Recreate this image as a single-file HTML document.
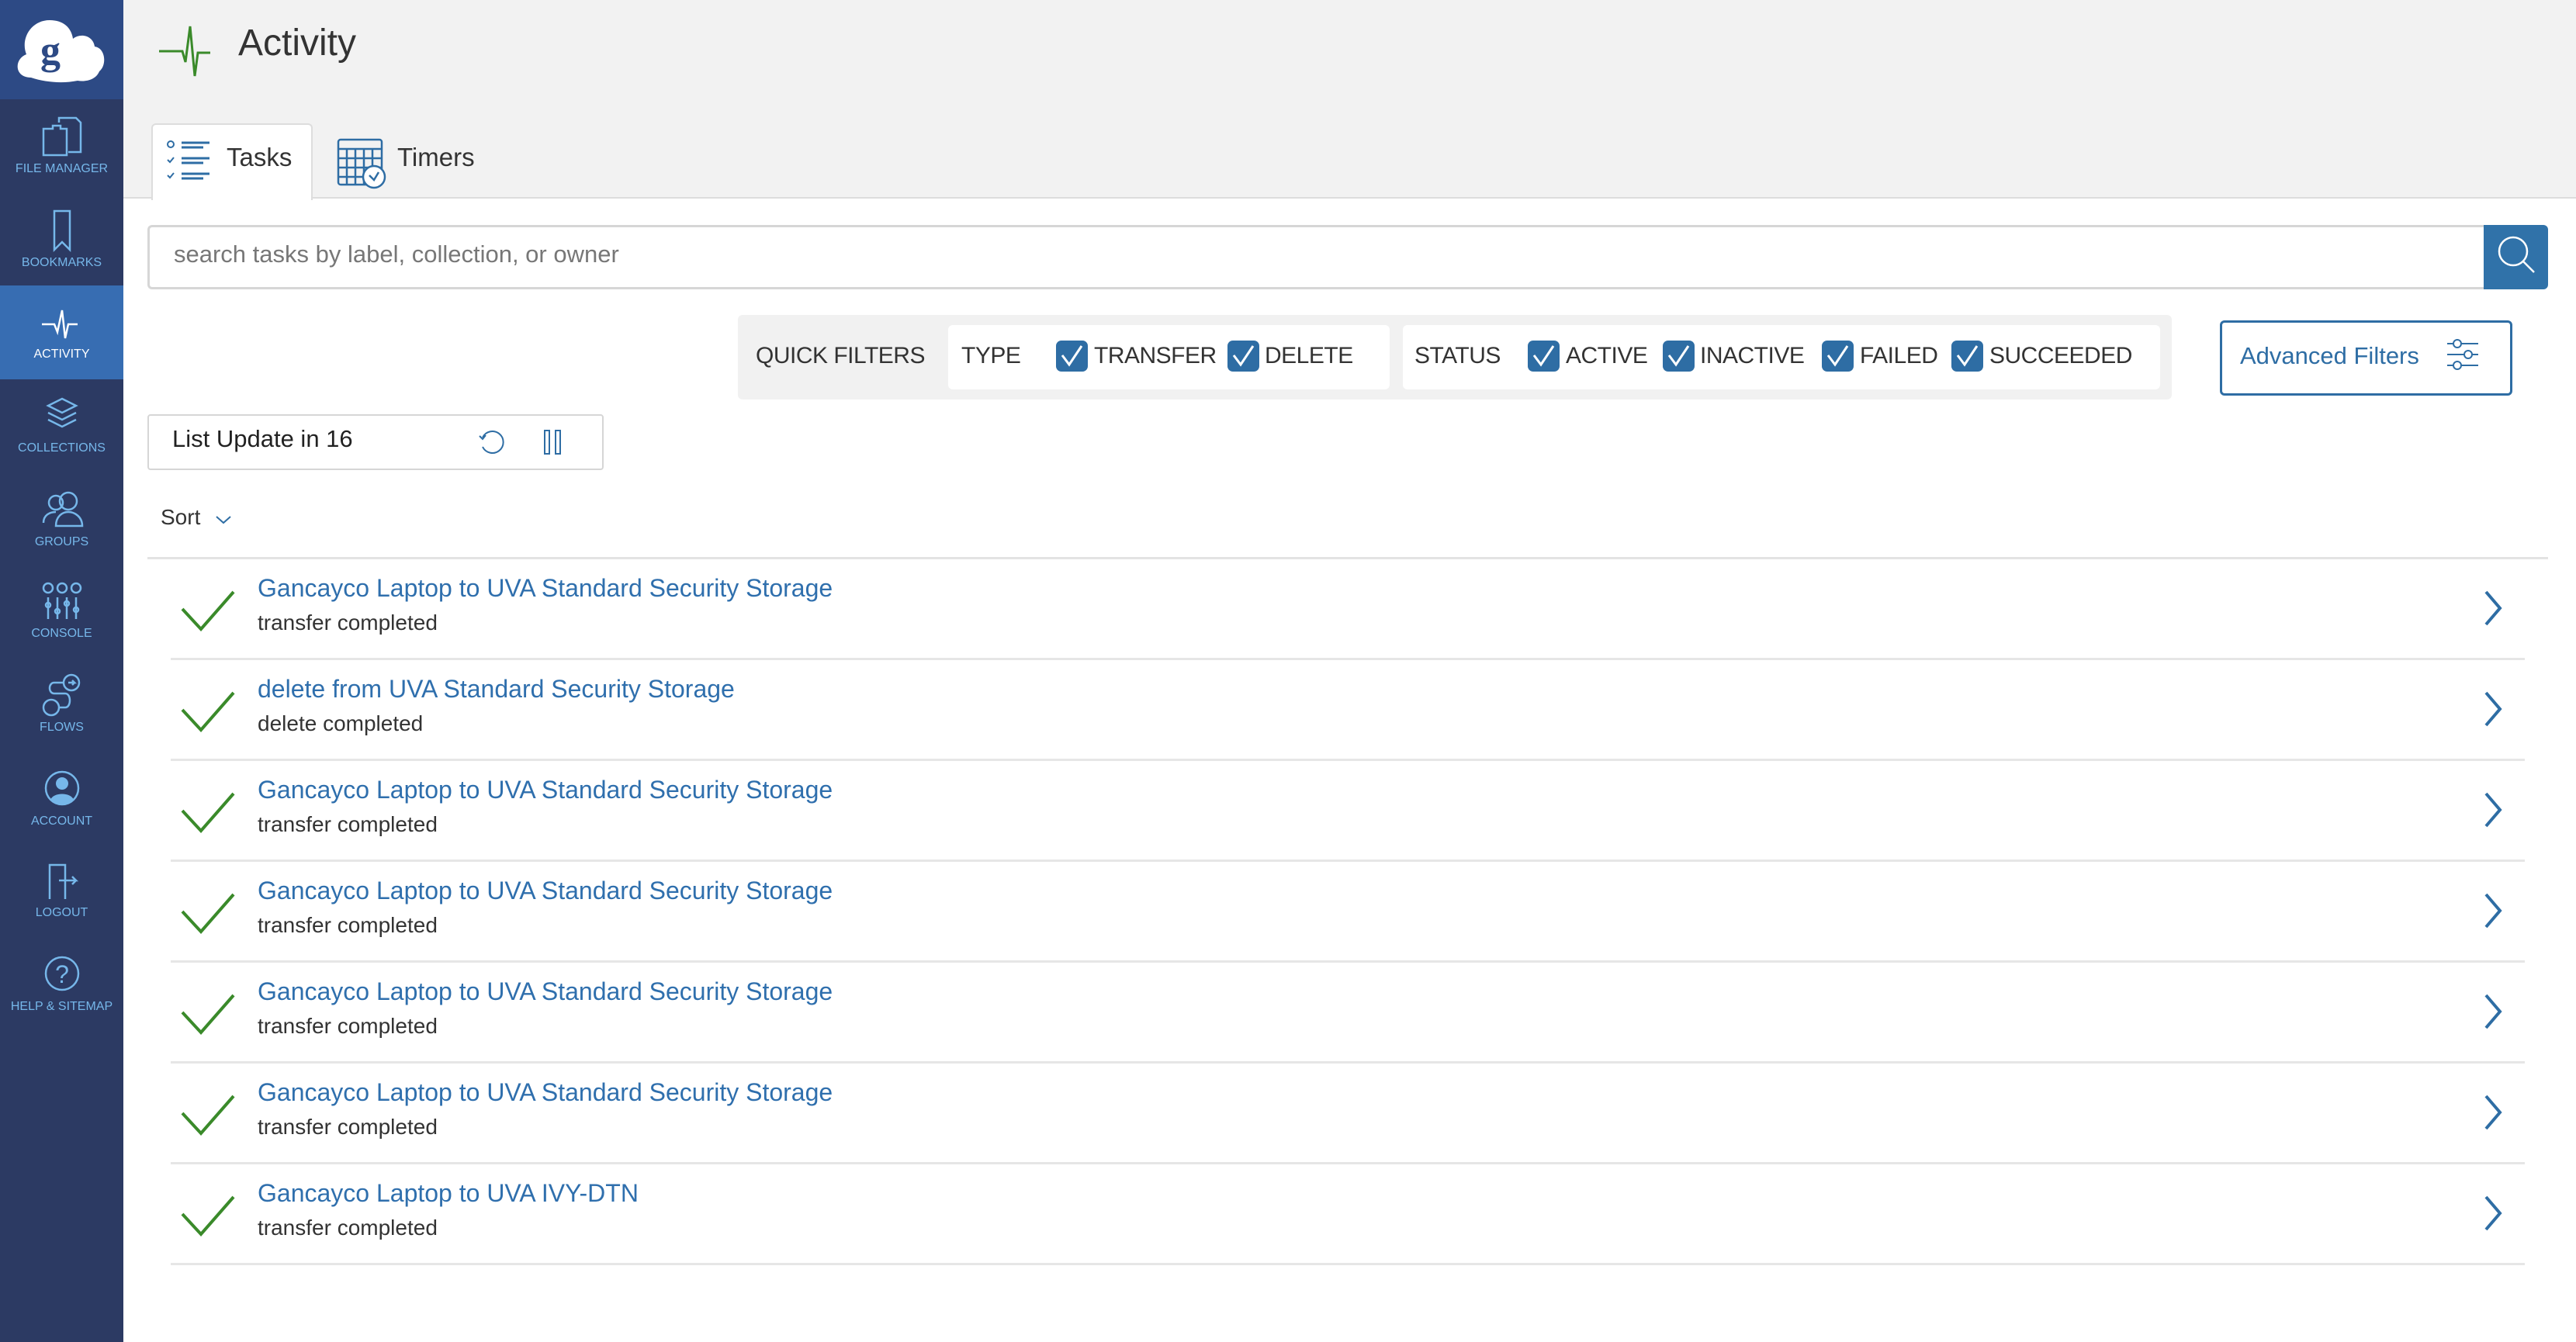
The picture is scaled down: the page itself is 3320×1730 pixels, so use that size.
<!DOCTYPE html>
<html><head><meta charset="utf-8"><style>
*{margin:0;padding:0;box-sizing:border-box}
body{width:3320px;height:1730px;position:relative;overflow:hidden;background:#fff;font-family:"Liberation Sans",sans-serif;color:#333}
.a{position:absolute}
#side{left:0;top:0;width:159px;height:1730px;background:#2c3a63}
#logo{left:0;top:0;width:159px;height:128px;background:#2d4a85}
#act{left:0;top:368px;width:159px;height:121px;background:#376db2}
.lbl{position:absolute;left:0;width:159px;text-align:center;font-size:16px;color:#76b7ea;line-height:20px}
.ic{position:absolute;left:50px;width:60px;height:60px}
#hdr{left:159px;top:0;width:3161px;height:256px;background:#f2f2f2;border-bottom:2px solid #ddd}
.tab{position:absolute;top:159px;height:99px;background:#fff;border:2px solid #ddd;border-bottom:none;border-radius:6px 6px 0 0}
.t{position:absolute;white-space:nowrap}
.cb{position:absolute;top:439px;width:41px;height:40px;background:#2e6da4;border-radius:7px}
.fl{position:absolute;top:441px;font-size:30px;color:#333;line-height:36px;letter-spacing:-0.5px}
.row{position:absolute;left:220px;width:3034px;height:130px;border-bottom:3px solid #e6e6e6}
.row .ti{position:absolute;left:112px;top:19px;font-size:32px;color:#2f6fad;white-space:nowrap}
.row .su{position:absolute;left:112px;top:66px;font-size:28px;color:#333;white-space:nowrap}
.row svg.ck{position:absolute;left:13px;top:38px}
.row svg.ch{position:absolute;left:2978px;top:38px}
</style></head><body>
<div id="side" class="a"></div>
<div id="logo" class="a">
<svg width="159" height="128" viewBox="0 0 159 128"><path d="M40 100 C18 100 18 76 34 70 C26 50 40 26 64 26 C82 26 92 36 94 50 C104 42 120 46 122 60 C136 62 138 84 128 92 C124 102 112 106 100 104 C80 108 58 106 40 100Z" fill="#fff"/><text x="52" y="82" font-family="Liberation Serif,serif" font-size="52" font-weight="bold" fill="#2d4a85">g</text></svg>
</div>
<div id="act" class="a"></div>
<svg class="ic" style="top:146px" viewBox="0 0 60 60" fill="none" stroke="#76b7ea" stroke-width="2.5"><path d="M6 20h12v-4h10v4h8v34H6z"/><path d="M26 12V6h22l6 6v38H38"/></svg>
<div class="lbl" style="top:208px">FILE MANAGER</div>
<svg class="ic" style="top:268px" viewBox="0 0 60 60" fill="none" stroke="#76b7ea" stroke-width="2.5"><path d="M20 4h20v50l-10-10-10 10z"/></svg>
<div class="lbl" style="top:329px">BOOKMARKS</div>
<svg class="ic" style="top:388px" viewBox="0 0 60 60" fill="none" stroke="#fff" stroke-width="2.5"><path d="M4 30h16l4 10 6-28 4 36 4-18h12"/></svg>
<div class="lbl" style="top:447px;color:#fff">ACTIVITY</div>
<svg class="ic" style="top:508px" viewBox="0 0 60 60" fill="none" stroke="#76b7ea" stroke-width="2.5"><path d="M30 6l18 9-18 9-18-9z"/><path d="M12 24l18 9 18-9"/><path d="M12 33l18 9 18-9"/></svg>
<div class="lbl" style="top:568px">COLLECTIONS</div>
<svg class="ic" style="top:628px" viewBox="0 0 60 60" fill="none" stroke="#76b7ea" stroke-width="2.5"><circle cx="22" cy="20" r="9"/><circle cx="38" cy="18" r="11"/><path d="M6 46c0-10 8-14 16-14M22 50c0-12 8-18 16-18s18 6 18 18z"/></svg>
<div class="lbl" style="top:689px">GROUPS</div>
<svg class="ic" style="top:748px" viewBox="0 0 60 60" fill="none" stroke="#76b7ea" stroke-width="2.5"><circle cx="12" cy="10" r="6"/><circle cx="30" cy="10" r="6"/><circle cx="48" cy="10" r="6"/><path d="M12 22v28M24 22v28M36 22v28M48 22v28"/><circle cx="12" cy="32" r="3"/><circle cx="24" cy="40" r="3"/><circle cx="36" cy="30" r="3"/><circle cx="48" cy="38" r="3"/></svg>
<div class="lbl" style="top:807px">CONSOLE</div>
<svg class="ic" style="top:866px" viewBox="0 0 60 60" fill="none" stroke="#76b7ea" stroke-width="2.5"><circle cx="42" cy="14" r="10"/><path d="M38 14h8l-3-3m3 3l-3 3"/><circle cx="16" cy="46" r="10"/><path d="M32 14H20c-8 0-8 14 0 14h14c8 0 8 18 0 18h-8"/></svg>
<div class="lbl" style="top:928px">FLOWS</div>
<svg class="ic" style="top:986px" viewBox="0 0 60 60"><circle cx="30" cy="30" r="21" fill="none" stroke="#76b7ea" stroke-width="2.5"/><circle cx="30" cy="24" r="8" fill="#76b7ea"/><path d="M15 45c4-10 26-10 30 0c-8 7-22 7-30 0z" fill="#76b7ea"/></svg>
<div class="lbl" style="top:1049px">ACCOUNT</div>
<svg class="ic" style="top:1105px" viewBox="0 0 60 60" fill="none" stroke="#76b7ea" stroke-width="2.5"><path d="M14 54V10h20v44"/><path d="M26 30h22l-5-5m5 5l-5 5"/></svg>
<div class="lbl" style="top:1167px">LOGOUT</div>
<svg class="ic" style="top:1225px" viewBox="0 0 60 60"><circle cx="30" cy="30" r="21" fill="none" stroke="#76b7ea" stroke-width="2.5"/><text x="30" y="42" text-anchor="middle" font-size="32" fill="#76b7ea" font-family="Liberation Sans">?</text></svg>
<div class="lbl" style="top:1288px">HELP &amp; SITEMAP</div>

<div id="hdr" class="a"></div>
<svg class="a" style="left:205px;top:30px" width="66" height="70" viewBox="0 0 66 70" fill="none" stroke="#3a8a2a" stroke-width="3"><path d="M0 36h30l4 14 6-46 6 64 4-30h16"/></svg>
<div class="t" style="left:307px;top:28px;font-size:48px;color:#333">Activity</div>
<div class="tab" style="left:195px;width:208px"></div>
<svg class="a" style="left:214px;top:178px" width="60" height="60" viewBox="0 0 60 60" fill="none" stroke="#2e6da4" stroke-width="3"><circle cx="6" cy="8" r="4" stroke-width="2"/><path d="M2 28l3 3 5-6M2 48l3 3 5-6" stroke-width="2"/><path d="M20 6h36M20 12h28M20 26h36M20 32h28M20 46h36M20 52h28"/></svg>
<div class="t" style="left:292px;top:184px;font-size:33px;color:#333">Tasks</div>
<svg class="a" style="left:434px;top:178px" width="66" height="66" viewBox="0 0 66 66" fill="none" stroke="#2e6da4" stroke-width="2.5"><rect x="2" y="2" width="56" height="58" rx="3"/><path d="M2 14h56M2 26h56M2 38h56M2 50h56M13 14v46M24 14v46M35 14v46M46 14v46"/><circle cx="48" cy="50" r="14" fill="#fff"/><path d="M42 48l6 6 6-10"/></svg>
<div class="t" style="left:512px;top:184px;font-size:33px;color:#333">Timers</div>

<div class="a" style="left:190px;top:290px;width:3012px;height:83px;border:3px solid #d6d6d6;border-right:none;border-radius:6px 0 0 6px"></div>
<div class="t" style="left:224px;top:310px;font-size:31px;color:#777">search tasks by label, collection, or owner</div>
<div class="a" style="left:3201px;top:290px;width:83px;height:83px;background:#3072a9;border-radius:0 6px 6px 0"></div>
<svg class="a" style="left:3215px;top:300px" width="60" height="60" viewBox="0 0 60 60" fill="none" stroke="#fff" stroke-width="2.5"><circle cx="24" cy="24" r="18"/><path d="M37 37l14 14"/></svg>

<div class="a" style="left:951px;top:406px;width:1848px;height:109px;background:#f1f1f1;border-radius:6px"></div>
<div class="a" style="left:1222px;top:419px;width:569px;height:83px;background:#fff;border-radius:6px"></div>
<div class="a" style="left:1808px;top:419px;width:976px;height:83px;background:#fff;border-radius:6px"></div>
<div class="fl" style="left:974px">QUICK FILTERS</div>
<div class="fl" style="left:1239px">TYPE</div>
<div class="fl" style="left:1823px">STATUS</div>
<div class="cb" style="left:1361px"></div><div class="fl" style="left:1410px">TRANSFER</div>
<div class="cb" style="left:1582px"></div><div class="fl" style="left:1630px">DELETE</div>
<div class="cb" style="left:1969px"></div><div class="fl" style="left:2018px">ACTIVE</div>
<div class="cb" style="left:2143px"></div><div class="fl" style="left:2191px">INACTIVE</div>
<div class="cb" style="left:2348px"></div><div class="fl" style="left:2397px">FAILED</div>
<div class="cb" style="left:2515px"></div><div class="fl" style="left:2564px">SUCCEEDED</div>
<svg class="a" style="left:0;top:0" width="3320" height="600" fill="none" stroke="#fff" stroke-width="3">
<path d="M1369 458l9 12 16-24M1590 458l9 12 16-24M1977 458l9 12 16-24M2151 458l9 12 16-24M2356 458l9 12 16-24M2523 458l9 12 16-24"/></svg>

<div class="a" style="left:2861px;top:413px;width:377px;height:97px;border:3px solid #2e6da4;border-radius:6px"></div>
<div class="t" style="left:2887px;top:441px;font-size:31px;color:#2e6da4">Advanced Filters</div>
<svg class="a" style="left:3152px;top:420px" width="46" height="80" viewBox="0 0 46 80" fill="none" stroke="#2e6da4" stroke-width="2"><path d="M2 23h40M2 37h40M2 51h40"/><circle cx="15" cy="23" r="5" fill="#fff"/><circle cx="29" cy="37" r="5" fill="#fff"/><circle cx="15" cy="51" r="5" fill="#fff"/></svg>

<div class="a" style="left:190px;top:534px;width:588px;height:72px;border:2px solid #d6d6d6;border-radius:4px"></div>
<div class="t" style="left:222px;top:548px;font-size:31px;color:#222">List Update in 16</div>
<svg class="a" style="left:614px;top:550px" width="40" height="40" viewBox="0 0 40 40" fill="none" stroke="#2e6da4" stroke-width="2"><path d="M8 14A14 14 0 1 1 8 26"/><path d="M4 12l4 4 4-5"/></svg>
<svg class="a" style="left:698px;top:553px" width="30" height="34" viewBox="0 0 30 34" fill="none" stroke="#2e6da4" stroke-width="2"><rect x="4" y="2" width="6" height="30"/><rect x="18" y="2" width="6" height="30"/></svg>
<div class="t" style="left:207px;top:651px;font-size:28px;color:#333">Sort</div>
<svg class="a" style="left:276px;top:660px" width="24" height="20" viewBox="0 0 24 20" fill="none" stroke="#2e6da4" stroke-width="2"><path d="M3 6l9 8 9-8"/></svg>

<div class="a" style="left:190px;top:718px;width:3094px;height:3px;background:#e3e3e3"></div>

<div class="row" style="top:721px"><svg class="ck" width="72" height="56" viewBox="0 0 72 56" fill="none" stroke="#3a8a2a" stroke-width="4"><path d="M2 26l24 26 42-48"/></svg><div class="ti">Gancayco Laptop to UVA Standard Security Storage</div><div class="su">transfer completed</div><svg class="ch" width="30" height="50" viewBox="0 0 30 50" fill="none" stroke="#2e6da4" stroke-width="4"><path d="M6 4l18 21-18 21"/></svg></div>
<div class="row" style="top:851px"><svg class="ck" width="72" height="56" viewBox="0 0 72 56" fill="none" stroke="#3a8a2a" stroke-width="4"><path d="M2 26l24 26 42-48"/></svg><div class="ti">delete from UVA Standard Security Storage</div><div class="su">delete completed</div><svg class="ch" width="30" height="50" viewBox="0 0 30 50" fill="none" stroke="#2e6da4" stroke-width="4"><path d="M6 4l18 21-18 21"/></svg></div>
<div class="row" style="top:981px"><svg class="ck" width="72" height="56" viewBox="0 0 72 56" fill="none" stroke="#3a8a2a" stroke-width="4"><path d="M2 26l24 26 42-48"/></svg><div class="ti">Gancayco Laptop to UVA Standard Security Storage</div><div class="su">transfer completed</div><svg class="ch" width="30" height="50" viewBox="0 0 30 50" fill="none" stroke="#2e6da4" stroke-width="4"><path d="M6 4l18 21-18 21"/></svg></div>
<div class="row" style="top:1111px"><svg class="ck" width="72" height="56" viewBox="0 0 72 56" fill="none" stroke="#3a8a2a" stroke-width="4"><path d="M2 26l24 26 42-48"/></svg><div class="ti">Gancayco Laptop to UVA Standard Security Storage</div><div class="su">transfer completed</div><svg class="ch" width="30" height="50" viewBox="0 0 30 50" fill="none" stroke="#2e6da4" stroke-width="4"><path d="M6 4l18 21-18 21"/></svg></div>
<div class="row" style="top:1241px"><svg class="ck" width="72" height="56" viewBox="0 0 72 56" fill="none" stroke="#3a8a2a" stroke-width="4"><path d="M2 26l24 26 42-48"/></svg><div class="ti">Gancayco Laptop to UVA Standard Security Storage</div><div class="su">transfer completed</div><svg class="ch" width="30" height="50" viewBox="0 0 30 50" fill="none" stroke="#2e6da4" stroke-width="4"><path d="M6 4l18 21-18 21"/></svg></div>
<div class="row" style="top:1371px"><svg class="ck" width="72" height="56" viewBox="0 0 72 56" fill="none" stroke="#3a8a2a" stroke-width="4"><path d="M2 26l24 26 42-48"/></svg><div class="ti">Gancayco Laptop to UVA Standard Security Storage</div><div class="su">transfer completed</div><svg class="ch" width="30" height="50" viewBox="0 0 30 50" fill="none" stroke="#2e6da4" stroke-width="4"><path d="M6 4l18 21-18 21"/></svg></div>
<div class="row" style="top:1501px"><svg class="ck" width="72" height="56" viewBox="0 0 72 56" fill="none" stroke="#3a8a2a" stroke-width="4"><path d="M2 26l24 26 42-48"/></svg><div class="ti">Gancayco Laptop to UVA IVY-DTN</div><div class="su">transfer completed</div><svg class="ch" width="30" height="50" viewBox="0 0 30 50" fill="none" stroke="#2e6da4" stroke-width="4"><path d="M6 4l18 21-18 21"/></svg></div>
</body></html>
